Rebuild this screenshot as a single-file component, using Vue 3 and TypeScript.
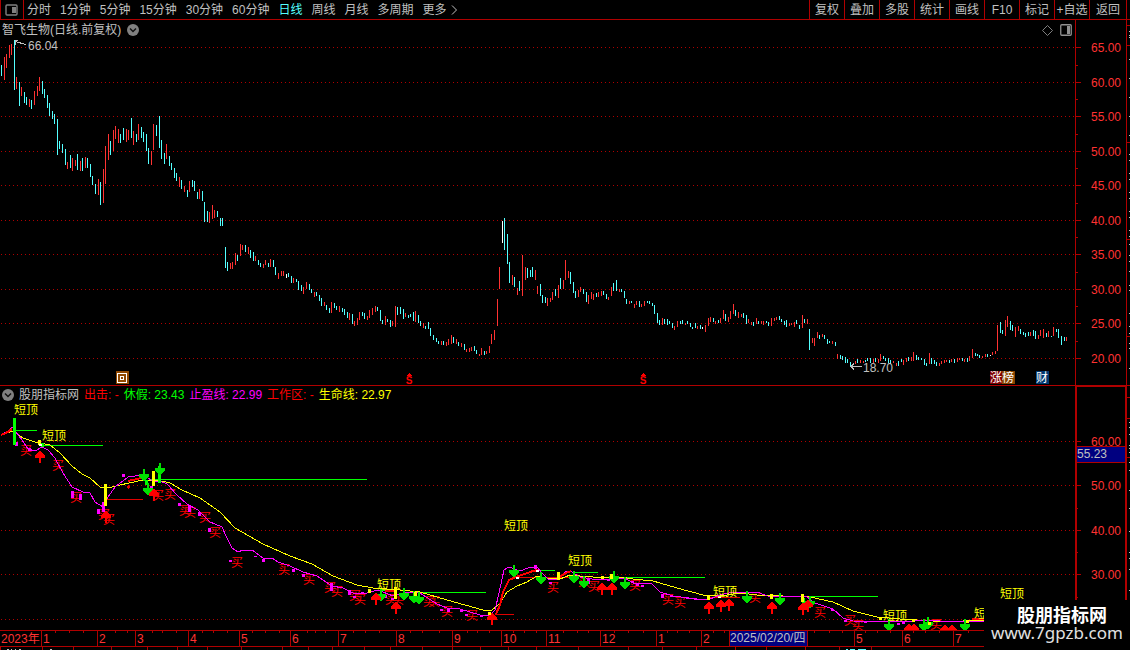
<script setup lang="ts">
import { computed, onBeforeUnmount, onMounted, ref } from 'vue'

interface Candle { x: number; top: number; bottom: number; tone: string }

const BASE_WIDTH = 1075

const periods = ['分时', '1分钟', '5分钟', '15分钟', '30分钟', '60分钟', '日线', '周线', '月线', '多周期', '更多']
const activePeriod = ref('日线')
const tools = ['复权', '叠加', '多股', '统计', '画线', 'F10', '标记', '+自选', '返回']

const plot = ref<HTMLElement | null>(null)
const plotWidth = ref(BASE_WIDTH)
let observer: ResizeObserver | undefined
onMounted(() => {
  const el = plot.value
  if (!el) return
  const measure = () => { plotWidth.value = el.clientWidth || BASE_WIDTH }
  measure()
  observer = new ResizeObserver(measure)
  observer.observe(el)
})
onBeforeUnmount(() => observer?.disconnect())

const scale = computed(() => plotWidth.value / BASE_WIDTH)
const sx = (x: number) => Math.round(x * scale.value)

// Each bar: x, high, low, tone (c = falling, r = rising, w = flat)
const bars = `1,65,76,c 4,57,80,r 6,54,68,r 9,45,58,r 11,44,55,r 14,40,90,c 16,77,89,r 19,82,106,c 21,87,96,r 24,92,103,c 26,97,105,c 29,99,107,r 31,100,109,c 34,91,105,r 37,86,96,r 39,77,91,r 42,81,94,c 44,89,98,c 47,95,108,c 49,103,116,c 52,111,119,c 54,114,124,c 57,119,155,c 59,141,149,c 62,144,153,c 65,149,165,c 67,162,169,r 70,155,168,c 72,158,171,r 75,160,166,r 77,154,170,c 80,161,171,r 82,158,171,c 85,157,168,r 87,158,168,c 90,164,177,c 92,176,185,c 95,184,194,c 98,179,195,r 100,182,205,c 103,169,203,r 105,146,184,r 108,134,160,r 110,141,155,c 113,130,151,r 115,126,139,r 118,129,143,r 120,134,143,c 123,128,140,c 126,129,142,r 128,130,140,r 131,118,138,c 133,131,145,r 136,134,142,c 138,124,140,r 141,127,138,c 143,132,142,c 146,134,151,c 148,148,164,c 151,151,165,r 153,124,150,r 156,125,136,c 159,116,148,c 161,140,159,c 164,153,164,c 166,144,159,r 169,156,166,c 171,163,170,c 174,168,178,c 176,173,181,c 179,177,187,r 181,180,189,c 184,186,192,r 187,190,197,c 189,181,192,r 192,180,187,c 194,181,191,c 197,192,199,c 199,189,199,r 202,191,201,c 204,202,222,c 207,211,222,c 209,212,223,r 212,205,219,r 214,210,218,r 217,211,217,c 220,218,226,c 222,218,226,c 225,247,268,c 227,262,271,c 230,263,269,r 232,262,269,r 235,253,265,r 237,255,261,c 240,244,256,r 242,245,250,r 245,245,252,c 248,247,254,r 250,250,258,c 253,252,261,c 255,256,261,r 258,260,265,c 260,263,267,c 263,264,268,r 265,260,265,r 268,263,267,c 270,259,267,r 273,260,267,c 275,267,275,c 278,273,279,r 281,271,276,r 283,271,276,r 286,274,278,w 288,273,277,c 291,276,283,c 293,278,283,r 296,279,282,c 298,281,290,c 301,285,291,c 303,287,294,r 306,282,289,r 309,284,290,c 311,289,293,c 314,292,297,r 316,292,296,c 319,295,301,c 321,298,306,c 324,302,306,r 326,305,310,c 329,308,313,c 331,302,313,r 334,303,308,c 336,306,310,c 339,306,312,r 342,308,312,c 344,309,315,c 347,312,318,c 349,313,320,r 352,314,324,c 354,321,326,r 357,318,325,r 359,312,320,r 362,312,316,c 364,313,319,c 367,316,320,r 369,310,318,r 372,308,315,r 375,306,312,r 377,307,311,c 380,310,321,c 382,320,324,c 385,316,325,r 387,319,322,c 390,320,327,c 392,321,326,r 395,306,327,r 397,307,315,c 400,307,314,c 403,309,319,c 405,313,317,r 408,315,318,c 410,314,317,c 413,312,321,c 415,311,322,r 418,315,323,c 420,321,326,c 423,323,328,r 425,326,329,c 428,322,329,c 430,328,336,c 433,335,340,c 436,338,342,c 438,341,344,c 441,341,345,r 443,341,345,c 446,342,346,r 448,339,345,r 451,335,344,r 453,337,343,c 456,339,344,r 458,342,346,c 461,343,347,r 464,344,350,c 466,349,352,r 469,348,352,r 471,347,351,r 474,346,351,c 476,350,354,c 479,354,356,r 481,348,355,r 484,351,355,c 486,351,354,r 489,346,353,r 491,334,344,r 494,330,340,r 497,299,326,r 499,267,289,r 502,221,243,w 504,218,250,c 507,234,264,c 509,262,283,c 512,275,285,r 514,277,287,c 517,288,295,r 519,281,291,c 522,255,296,r 525,267,280,r 527,268,278,c 530,270,277,c 532,267,277,c 535,270,280,r 537,286,294,r 540,284,296,c 542,295,303,c 545,297,303,c 547,298,306,r 550,298,302,r 552,292,300,r 555,289,296,c 558,285,298,r 560,278,289,c 563,280,289,r 565,260,280,r 568,271,278,r 570,272,284,c 573,282,293,c 575,291,298,c 578,290,297,r 580,287,292,r 583,289,294,c 586,292,302,c 588,295,304,r 591,292,299,r 593,294,300,r 596,293,297,c 598,292,297,r 601,291,296,r 603,291,295,c 606,294,299,c 608,297,300,r 611,287,296,r 613,283,291,c 616,280,291,c 619,289,292,r 621,289,292,c 624,291,298,c 626,299,304,c 629,301,304,r 631,301,303,c 634,304,308,r 636,301,305,r 639,301,307,c 641,304,307,r 644,301,306,r 647,301,303,c 649,301,304,c 652,303,306,c 654,305,314,c 657,313,323,c 659,320,325,c 662,318,325,r 664,319,324,c 667,319,325,c 669,321,324,c 672,323,328,c 674,326,330,r 677,321,327,r 680,321,324,c 682,320,324,c 685,323,325,r 687,321,324,c 690,323,327,c 692,327,329,c 695,323,328,c 697,326,329,r 700,325,329,c 702,327,329,w 705,325,332,r 708,318,326,r 710,317,322,r 713,318,322,c 715,321,324,r 718,320,323,c 720,318,323,r 723,310,319,r 725,314,321,c 728,317,322,r 730,311,319,r 733,304,314,r 735,310,316,c 738,312,318,r 741,314,317,r 743,313,318,c 746,315,324,c 748,319,323,r 751,322,325,r 753,322,326,c 756,318,324,r 758,321,324,c 761,321,324,r 763,321,325,r 766,321,323,c 768,322,326,c 771,318,326,r 774,318,321,r 776,317,320,r 779,316,320,c 781,319,322,c 784,321,325,c 786,320,327,c 789,323,326,r 791,323,325,r 794,322,327,r 796,320,324,c 799,325,329,c 802,315,328,r 804,319,323,c 807,319,324,r 809,329,350,c 812,338,343,r 814,338,346,r 817,332,338,r 819,335,339,c 822,334,337,r 824,335,339,c 827,339,344,c 829,341,343,c 832,341,344,r 835,342,346,c 837,354,359,r 840,355,359,c 842,356,360,c 845,357,363,c 847,359,363,c 850,362,366,c 852,364,368,c 855,361,364,r 857,359,363,c 860,360,363,r 863,361,363,r 865,360,362,c 867,358,361,c 870,358,363,c 873,359,363,r 875,358,362,c 878,359,363,r 880,354,361,r 883,356,359,c 885,358,361,c 888,358,363,c 890,360,364,c 893,361,363,r 896,363,366,r 898,361,366,c 901,359,362,c 903,360,365,r 906,358,362,r 908,357,361,c 911,357,361,r 913,352,361,r 916,355,360,c 918,357,360,c 921,358,360,c 924,359,365,c 926,363,366,c 929,353,364,r 931,358,364,c 934,360,364,c 936,362,366,c 939,363,366,r 941,361,364,r 944,360,363,r 946,360,362,r 949,360,363,c 951,359,362,r 954,359,363,c 957,358,362,r 959,358,360,r 962,358,361,c 964,359,362,r 967,358,362,c 969,356,361,r 972,349,358,r 975,353,356,c 977,354,356,c 979,355,358,c 982,356,358,r 985,354,357,r 987,354,357,c 990,355,356,w 992,352,355,r 995,351,354,r 997,325,351,r 1000,322,333,c 1002,330,334,c 1005,320,336,r 1007,316,327,r 1010,321,330,c 1012,325,331,c 1015,327,337,r 1018,326,331,r 1020,329,334,c 1023,332,335,c 1025,333,337,c 1028,332,336,c 1030,332,336,r 1033,330,336,c 1035,331,339,c 1038,335,339,r 1040,330,336,r 1043,329,338,r 1046,333,337,c 1048,331,337,r 1051,336,337,c 1053,327,336,r 1056,329,332,c 1058,329,338,c 1061,336,345,c 1064,337,341,c 1066,337,341,r`

const candles: Candle[] = bars.split(' ').map((item) => {
  const [x, top, bottom, tone] = item.split(',')
  return { x: Number(x), top: Number(top), bottom: Number(bottom), tone }
})

const parse = (text: string): number[][] => text.trim().split(/\s+/).map((p) => p.split(',').map(Number))
const path = (text: string) => parse(text).map(([x, y]) => `${x * scale.value},${y}`).join(' ')

const priceGrid = [47, 82, 116, 151, 185, 220, 254, 289, 323, 358]
const priceLabels = priceGrid.map((y, i) => ({ y, text: (65 - i * 5).toFixed(2) }))
const priceMinor = [65, 99, 134, 168, 203, 237, 272, 306, 341]
const indicatorGrid = [441, 485, 530, 574, 619]
const indicatorLabels = [
  { y: 441, text: '60.00' }, { y: 485, text: '50.00' }, { y: 530, text: '40.00' }, { y: 574, text: '30.00' },
]
const indicatorMinor = [508, 552, 597]

const lifeLine = `1,435 13,431 23,438 35,442 50,445 60,453 72,466 82,474 90,478 100,487 108,488 120,485 143,480 157,480 170,483 182,490 200,498 220,512 235,528 263,544 290,556 312,564 333,576 357,585 373,588 387,589 400,590 420,592 447,600 483,610 492,610 497,606 500,603 507,592 517,586 527,582 537,576 547,578 560,579 570,575 580,576 593,577 620,577 633,579 653,581 677,588 703,595 727,595 740,593 757,595 783,596 810,597 833,602 853,611 877,617 900,619 933,621 963,621 990,620`
const stopLine = `1,435 8,431 12,427 16,432 22,440 28,449 35,451 42,447 48,450 55,458 63,473 72,487 83,492 90,493 95,502 103,507 108,497 115,487 128,477 142,475 147,477 152,481 160,481 167,484 177,495 187,504 198,510 210,522 222,527 227,538 232,548 238,552 243,550 252,550 263,558 272,558 278,562 290,566 303,572 317,576 332,586 343,588 353,593 367,593 378,590 393,596 407,592 420,593 437,604 447,608 460,609 480,615 490,615 495,610 499,593 504,570 509,567 520,571 528,568 537,567 542,573 548,579 558,579 565,572 570,571 580,577 592,579 617,579 625,578 633,583 652,584 660,592 673,596 697,599 710,599 720,595 733,592 747,592 760,593 767,596 807,597 815,603 833,609 843,618 853,621 900,622 927,620 940,621 990,621`
const strikeLines = [
  '1,435 6,433 12,429', '128,481 137,479 144,477', '496,614 500,605 503,592 509,580 516,577 533,571 538,570',
  '558,578 566,573 571,571', '385,591 395,591', '972,619 990,619',
]

// Horizontal levels: start x, end x, y, and 1 where the level is a support
const levels = parse('16,37,430,0 43,103,445,0 150,367,479,0 380,397,590,0 413,486,592,0 537,555,570,0 575,598,572,0 623,705,577,0 777,878,596,0 106,143,499,1 495,514,614,1 707,740,597,1 519,570,577,1')

const magentaBars = parse('15,442,4 28,448,3 71,491,7 79,494,6 97,509,5 102,502,10 122,474,3 150,486,5 178,503,3 188,505,7 198,512,4 208,528,4 229,560,2 254,556,1 262,559,3 292,569,3 302,574,3 330,583,8 348,590,5 353,596,2 361,592,2 384,595,3 391,598,2 440,609,2 447,608,4 460,610,2 465,614,2 480,615,2 534,565,4 549,582,2 587,579,5 607,579,2 631,581,2 636,583,3 641,585,2 661,594,4 670,595,2 686,597,2 694,598,2 831,609,2 844,620,2 864,621,2 897,623,2 902,622,2')
const yellowBars = parse('38,440,5 104,484,22 152,471,15 368,589,4 394,587,12 414,592,4 488,612,3 557,572,8 601,576,3 610,574,5 707,595,5 770,594,5 801,594,8 879,617,3 912,619,3 928,622,3 966,620,3')
const greenBars = parse('13,418,27 41,443,4 145,480,5 158,466,17 802,598,5')
const whiteBars = parse('39,444,2 516,577,2 536,570,2 718,596,2')

const buys = parse('20,450 52,465 70,497 98,514 103,519 152,495 164,494 179,510 184,512 199,517 209,532 231,562 278,569 303,579 324,587 331,591 349,595 354,599 385,599 392,599 423,601 428,601 441,611 466,615 547,587 578,581 588,586 629,585 662,599 674,602 749,597 814,612 844,620 852,625 930,624')
const tops = parse('14,409 42,435 377,584 504,525 568,560 713,591 883,615 974,613 1000,593')
const upArrows = parse('40,451 106,511 154,489 376,593 396,602 492,613 602,583 612,583 709,602 721,600 729,599 772,602 803,603 808,600 909,624 914,624 945,625 952,625')
const downArrows = parse('144,481 148,495 160,475 381,601 404,600 414,603 419,604 514,577 541,584 574,583 584,588 614,583 625,589 747,603 780,605 810,608 889,631 924,631 928,629 965,631')

const months = [
  { x: 41, text: '1' }, { x: 97, text: '2' }, { x: 135, text: '3' }, { x: 188, text: '4' }, { x: 239, text: '5' },
  { x: 290, text: '6' }, { x: 338, text: '7' }, { x: 396, text: '8' }, { x: 452, text: '9' }, { x: 501, text: '10' },
  { x: 546, text: '11' }, { x: 600, text: '12' }, { x: 656, text: '1' }, { x: 701, text: '2' },
  { x: 854, text: '5' }, { x: 902, text: '6' }, { x: 953, text: '7' },
]
const weekTicks = [55, 69, 83, 115, 127, 152, 162, 176, 202, 213, 227, 252, 265, 279, 307, 315, 325, 353, 365, 379, 410, 422, 439, 467, 477, 489, 513, 524, 536, 563, 577, 588, 614, 628, 643, 667, 677, 689, 713, 724, 814, 829, 842, 865, 877, 890, 913, 925, 939, 968]
const footTicks = [0, 42, 73, 111, 147, 177, 207, 241, 282, 308, 332, 364, 390, 422, 452, 480, 508, 536, 578, 628, 662, 696, 735, 766, 805, 839, 871]
const edgeMarks = [31, 35, 37, 59, 78, 97, 116, 135, 154, 160, 173, 179, 192, 198, 211, 217, 230, 236, 244, 255, 261, 271, 285, 290, 313, 326, 333, 343, 348, 368]
const lowerEdgeMarks = [422, 427, 434, 445, 448, 452, 462, 470, 490, 508, 531, 552, 558, 569, 590]
</script>

<template>
  <div class="terminal">
    <header class="toolbar">
      <button class="panel-toggle" type="button" aria-label="侧栏">
        <svg width="14" height="12" viewBox="0 0 14 12">
          <rect x="1" y="1" width="11" height="10" rx="1" fill="none" stroke="#808080" stroke-width="1.4" />
          <rect x="7" y="3" width="4" height="6" fill="#808080" />
        </svg>
      </button>
      <nav class="periods">
        <button
          v-for="p in periods" :key="p" type="button"
          :class="{ active: p === activePeriod }" @click="activePeriod = p"
        >{{ p }}<svg v-if="p === '更多'" width="7" height="10" viewBox="0 0 7 10"><path d="M1 .5 5.5 5 1 9.5" fill="none" stroke="#c0c0c0" /></svg></button>
      </nav>
      <div class="tools">
        <button v-for="t in tools" :key="t" type="button">{{ t }}</button>
      </div>
      <span class="edge"></span>
    </header>

    <section class="panel price">
      <div ref="plot" class="plot">
        <div class="title">
          <h1>智飞生物(日线.前复权)</h1>
          <button class="round" type="button" aria-label="展开">
            <svg width="12" height="12" viewBox="0 0 12 12"><circle cx="6" cy="6" r="6" fill="#808080" /><path d="M3 4.5 6 7.5 9 4.5" fill="none" stroke="#101010" stroke-width="1.5" /></svg>
          </button>
          <div class="title-icons">
            <svg width="11" height="11" viewBox="0 0 11 11"><path d="M5.5 .5 10.5 5.5 5.5 10.5 .5 5.5Z" fill="none" stroke="#808080" /></svg>
            <svg width="12" height="12" viewBox="0 0 12 12"><rect x=".75" y=".75" width="10.5" height="10.5" rx="1" fill="none" stroke="#909090" stroke-width="1.3" /><rect x="7" y="2" width="3" height="8" fill="#909090" /></svg>
          </div>
        </div>
        <svg class="chart" :width="plotWidth" height="347" :viewBox="`0 38 ${plotWidth} 347`">
          <line v-for="y in priceGrid" :key="y" class="grid" x1="1" :x2="plotWidth" :y1="y + 0.5" :y2="y + 0.5" />
          <rect v-for="c in candles" :key="c.x" :class="c.tone" :x="sx(c.x)" :y="c.top" width="1" :height="c.bottom - c.top" />
          <path class="pointer" :transform="`translate(${sx(14)} 40)`" d="M12 4.5 8 3.5 5 2.5 1 1.5M4 .5H1V4.5" />
          <text class="note" :x="sx(28)" y="50">66.04</text>
          <path class="pointer" :transform="`translate(${sx(850)} 366)`" d="M12 .5H1M4 -2.5 1 .5 4 3.5" />
          <text class="note" :x="sx(863)" y="372">18.70</text>
          <g :transform="`translate(${sx(116)} 371)`">
            <rect width="13" height="13" fill="#904800" />
            <rect x="1.5" y="2.5" width="9" height="9" fill="none" stroke="#fff" />
            <rect x="4.5" y="5.5" width="3" height="3" fill="none" stroke="#fff" />
          </g>
          <g v-for="x in [409, 643]" :key="x" :transform="`translate(${sx(x)} 373)`">
            <path d="M-3 3 0 0 3 3Z" fill="#f00" />
            <text class="split" x="0" y="11">S</text>
          </g>
          <g :transform="`translate(${sx(990)} 371)`">
            <rect width="12" height="13" fill="#800000" />
            <rect x="12" width="13" height="13" fill="#884400" />
            <text class="badge" x="0" y="11">涨榜</text>
          </g>
          <g :transform="`translate(${sx(1036)} 371)`">
            <rect width="13" height="13" fill="#003870" />
            <text class="badge" x="0" y="11">财</text>
          </g>
        </svg>
      </div>
      <svg class="axis" width="55" height="365" viewBox="0 20 55 365">
        <rect class="rule" x="0" y="20" width="1" height="365" />
        <rect class="rule" x="51" y="20" width="1" height="365" />
        <g v-for="l in priceLabels" :key="l.y">
          <rect class="rule" x="0" :y="l.y" width="6" height="1" />
          <text class="scale" x="46" :y="l.y + 5">{{ l.text }}</text>
        </g>
        <rect v-for="y in priceMinor" :key="y" class="rule" x="0" :y="y" width="3" height="1" />
        <rect v-for="y in [25, 45, 142, 239, 336]" :key="y" class="rule" x="52" :y="y" width="3" height="1" />
        <rect v-for="y in edgeMarks" :key="y" class="mark" x="54" :y="y" width="1" height="1" />
      </svg>
    </section>

    <section class="panel indicator">
      <div class="plot">
        <div class="legend">
          <button class="round" type="button" aria-label="展开">
            <svg width="12" height="12" viewBox="0 0 12 12"><circle cx="6" cy="6" r="6" fill="#808080" /><path d="M3 4.5 6 7.5 9 4.5" fill="none" stroke="#101010" stroke-width="1.5" /></svg>
          </button>
          <span>股朋指标网</span>
          <span class="red">出击: -</span>
          <span class="green">休假: 23.43</span>
          <span class="magenta">止盈线: 22.99</span>
          <span class="red">工作区: -</span>
          <span class="yellow">生命线: 22.97</span>
        </div>
        <svg class="chart" :width="plotWidth" height="226" :viewBox="`0 404 ${plotWidth} 226`">
          <line v-for="y in indicatorGrid" :key="y" class="grid" x1="1" :x2="plotWidth" :y1="y + 0.5" :y2="y + 0.5" />
          <text v-for="([x, y], i) in buys" :key="`b${i}`" class="buy" :x="sx(x)" :y="y + 5">买</text>
          <rect
            v-for="([a, b, y, rise], i) in levels" :key="`l${i}`" :fill="rise ? '#e00000' : '#00ff00'"
            :x="sx(a)" :y="y" :width="sx(b) - sx(a)" height="1"
          />
          <polyline class="line life" :points="path(lifeLine)" />
          <polyline class="line stop" :points="path(stopLine)" />
          <polyline v-for="s in strikeLines" :key="s" class="line strike" :points="path(s)" />
          <rect v-for="([x, y, h], i) in magentaBars" :key="`m${i}`" fill="#f0f" :x="sx(x)" :y="y" width="3" :height="h" />
          <rect v-for="([x, y, h], i) in greenBars" :key="`g${i}`" fill="#0f0" :x="sx(x)" :y="y" width="3" :height="h" />
          <path v-for="([x, y], i) in downArrows" :key="`d${i}`" fill="#00e000" :transform="`translate(${sx(x)} ${y})`" d="M-1 -12H1V-7H5V-5L1 0H-1L-5 -5V-7H-1Z" />
          <path v-for="([x, y], i) in upArrows" :key="`u${i}`" fill="#f00" :transform="`translate(${sx(x)} ${y})`" d="M-1 12H1V7H5V5L1 0H-1L-5 5V7H-1Z" />
          <rect v-for="([x, y, h], i) in yellowBars" :key="`y${i}`" fill="#ff0" :x="sx(x)" :y="y" width="3" :height="h" />
          <rect v-for="([x, y, h], i) in whiteBars" :key="`w${i}`" fill="#fff" :x="sx(x)" :y="y" width="3" :height="h" />
          <path d="M0 -2 2 0 0 2 -2 0Z" fill="#e00000" :transform="`translate(${sx(128)} 487)`" />
          <text v-for="([x, y], i) in tops" :key="`t${i}`" class="top" :x="sx(x)" :y="y + 5">短顶</text>
        </svg>
      </div>
      <svg class="axis" width="55" height="244" viewBox="0 386 55 244">
        <rect class="rule" x="0" y="386" width="2" height="244" />
        <rect class="rule" x="0" y="386" width="52" height="1" />
        <rect class="rule" x="50" y="386" width="2" height="244" />
        <g v-for="l in indicatorLabels" :key="l.y">
          <rect class="rule" x="0" :y="l.y" width="6" height="1" />
          <text class="scale" x="46" :y="l.y + 5">{{ l.text }}</text>
        </g>
        <rect v-for="y in indicatorMinor" :key="y" class="rule" x="0" :y="y" width="3" height="1" />
        <rect x="2" y="447" width="48" height="15" fill="#000080" />
        <rect class="rule" x="1" y="446" width="50" height="1" />
        <rect class="rule" x="1" y="462" width="50" height="1" />
        <text class="cursor" x="2" y="458">55.23</text>
        <rect v-for="y in [397, 418, 457]" :key="y" class="rule" x="52" :y="y" width="3" height="1" />
        <rect v-for="y in lowerEdgeMarks" :key="y" class="mark" x="54" :y="y" width="1" height="1" />
      </svg>
    </section>

    <footer class="timeline">
      <svg :width="plotWidth" height="20" :viewBox="`0 630 ${plotWidth} 20`">
        <rect class="rule" x="0" y="630" :width="plotWidth" height="1" />
        <rect class="rule" x="0" y="646" :width="plotWidth" height="1" />
        <rect v-for="x in weekTicks" :key="x" class="rule" :x="sx(x)" y="631" width="1" height="2" />
        <rect v-for="x in footTicks" :key="x" class="rule" :x="sx(x)" y="647" width="1" height="3" />
        <text class="date" x="1" y="643">2023年</text>
        <g v-for="m in months" :key="m.x">
          <rect class="rule" :x="sx(m.x)" y="631" width="1" height="15" />
          <text class="date" :x="sx(m.x) + 2" y="643">{{ m.text }}</text>
        </g>
        <g :transform="`translate(${sx(729)} 631)`">
          <rect width="79" height="15" fill="#000080" />
          <rect class="rule" width="1" height="15" />
          <rect class="rule" x="78" width="1" height="15" />
          <text class="cursor" x="1" y="11">2025/02/20/四</text>
        </g>
        <path :transform="`translate(${sx(7)} 649)`" d="M0 0H2V1H0ZM4 0H5V1H4ZM8 0H9V1H8ZM12 0H14V1H12ZM43 0H45V1H43Z" fill="#c0c0c0" />
        <path :transform="`translate(${sx(844)} 649)`" d="M2 0H4V1H2ZM6 0H11V1H6ZM14 0H22V1H14Z" fill="#54ffff" />
      </svg>
    </footer>

    <aside class="site">
      <strong>股朋指标网</strong>
      <a href="#">www.7gpzb.com</a>
    </aside>
  </div>
</template>

<style>
body { background: #000; }
</style>

<style scoped>
.terminal {
  position: relative;
  overflow: hidden;
  background: #000;
  color: #c0c0c0;
  font: 12px/16px "Liberation Sans", "Noto Sans CJK SC", sans-serif;
}
button {
  margin: 0;
  padding: 0;
  border: 0;
  background: none;
  color: inherit;
  font: inherit;
  white-space: nowrap;
  cursor: pointer;
}
svg { display: block; shape-rendering: crispEdges; }
button svg, .title-icons svg { shape-rendering: auto; }

.toolbar {
  display: flex;
  height: 19px;
  border-bottom: 1px solid #b00000;
}
.panel-toggle {
  display: flex;
  align-items: center;
  justify-content: center;
  width: 24px;
  flex: none;
  border-left: 1px solid #b00000;
  border-right: 1px solid #b00000;
}
.periods {
  display: flex;
  flex: 1;
  align-items: center;
  gap: 9px;
  padding-left: 3px;
}
.periods button { display: flex; align-items: center; gap: 4px; }
.periods .active { color: #54ffff; }
.tools { display: flex; }
.tools button { width: 35px; border-left: 1px solid #b00000; }
.tools button:last-child { width: 37px; }
.edge { width: 3px; border-left: 1px solid #b00000; }

.panel { display: grid; grid-template-columns: minmax(0, 1fr) 55px; }
.price { border-bottom: 1px solid #b00000; }
.title {
  display: flex;
  align-items: center;
  box-sizing: border-box;
  height: 18px;
  gap: 6px;
  padding: 2px 3px 0 2px;
}
h1 { margin: 0; font-size: 12px; font-weight: 400; line-height: 16px; }
.title-icons { display: flex; align-items: center; gap: 7px; margin-left: auto; }
.legend {
  display: flex;
  align-items: center;
  box-sizing: border-box;
  height: 18px;
  gap: 5px;
  padding: 0 2px 1px;
  white-space: nowrap;
}
.red { color: #f00; }
.green { color: #0f0; }
.magenta { color: #f0f; }
.yellow { color: #ff0; }

.grid { stroke: #b00000; stroke-width: 1; stroke-dasharray: 1 3; }
.rule { fill: #b00000; }
.mark { fill: #c0c0c0; }
.c { fill: #54ffff; }
.r { fill: #ff3232; }
.w { fill: #fff; }
.pointer { fill: none; stroke: #c0c0c0; }
.note, .cursor { fill: #c0c0c0; }
.badge { fill: #fff; }
.split { fill: #f00; font-size: 10px; font-weight: 700; text-anchor: middle; }
.scale { fill: #ff3232; text-anchor: end; }
.date { fill: #ff3232; }
.buy { fill: #f00; }
.top { fill: #ff0; }
.line { fill: none; stroke-width: 1; }
.life { stroke: #ff0; }
.stop { stroke: #f0f; }
.strike { stroke: #f00; stroke-width: 2; }

.site {
  position: absolute;
  right: 0;
  bottom: 0;
  width: 146px;
  height: 50px;
  display: flex;
  flex-direction: column;
  align-items: center;
  box-sizing: border-box;
  padding-top: 4px;
  background: #000;
  color: #fff;
}
.site strong { padding-left: 10px; font: 700 18px/20px "Noto Sans CJK SC", sans-serif; }
.site a { color: #e0e0e0; font: 17px/18px "Noto Sans", sans-serif; text-decoration: none; }
</style>
